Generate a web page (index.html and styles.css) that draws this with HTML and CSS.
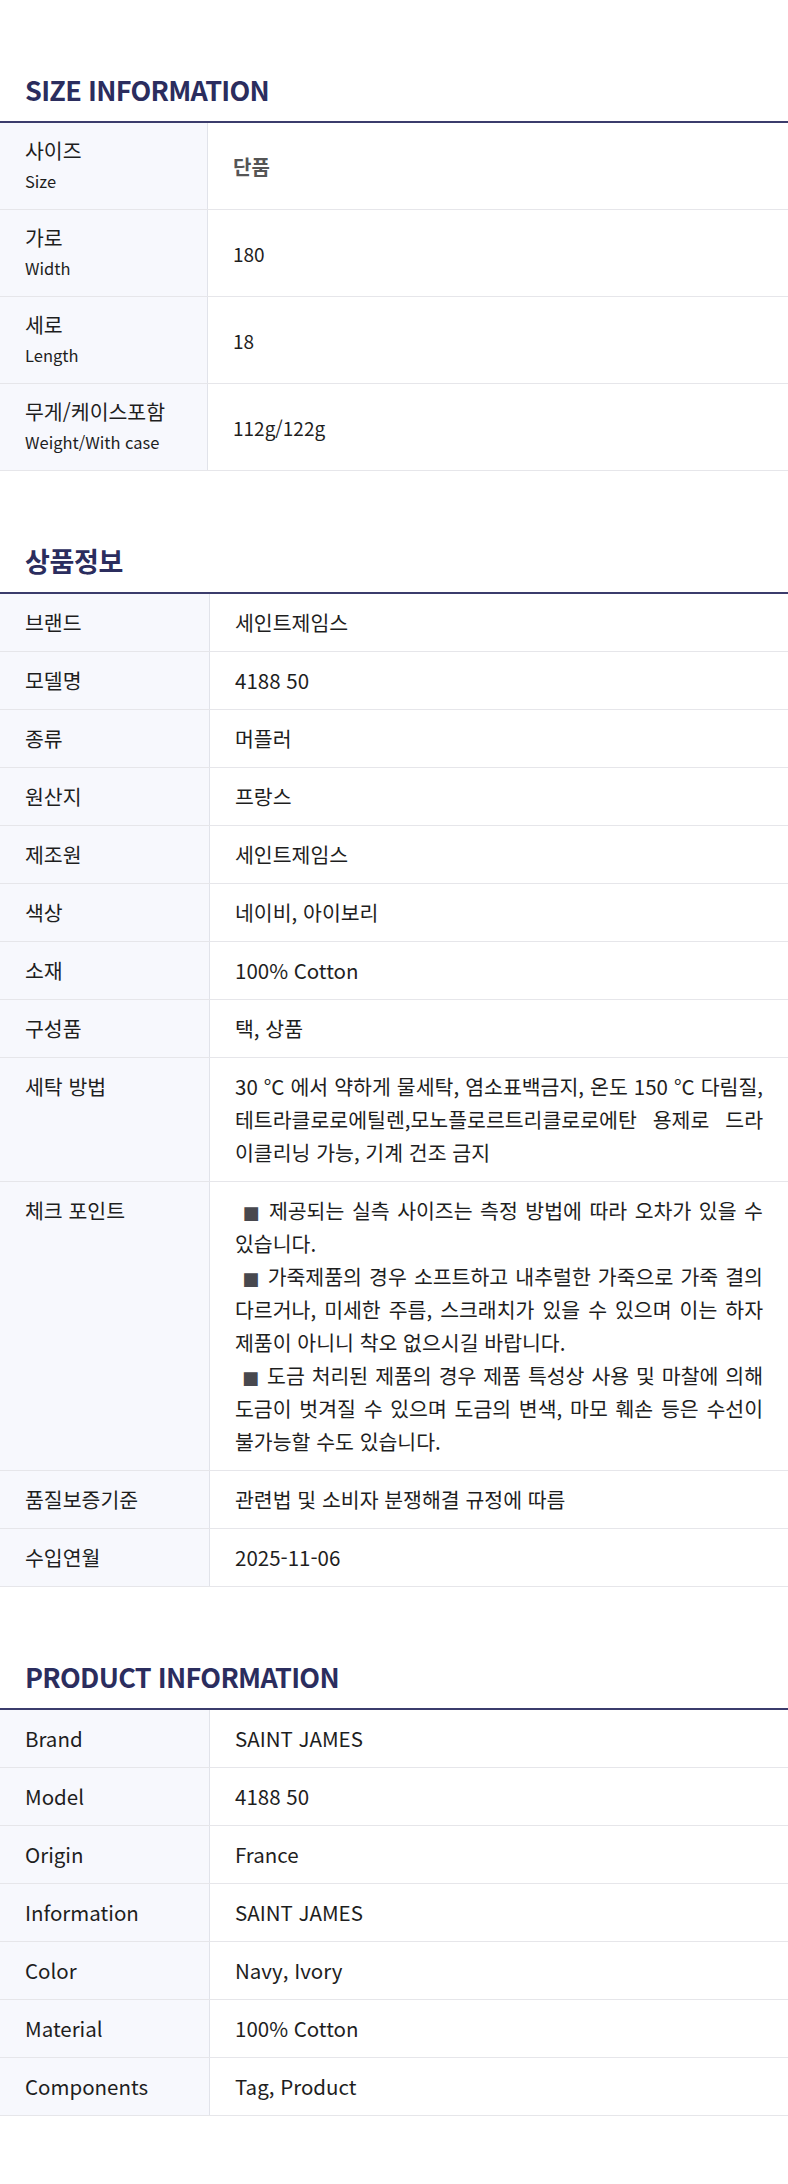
FILE: index.html
```html
<!DOCTYPE html>
<html lang="ko">
<head>
<meta charset="utf-8">
<title>상품 정보</title>
<link rel="stylesheet" href="styles.css">
</head>
<body>
<main class="page">
  <section class="block">
    <h2 class="block-title block-title-en">SIZE INFORMATION</h2>
    <div class="spec spec-size">
      <div class="row">
        <div class="label"><span class="ko">사이즈</span><span class="en">Size</span></div>
        <div class="value value-strong">단품</div>
      </div>
      <div class="row">
        <div class="label"><span class="ko">가로</span><span class="en">Width</span></div>
        <div class="value">180</div>
      </div>
      <div class="row">
        <div class="label"><span class="ko">세로</span><span class="en">Length</span></div>
        <div class="value">18</div>
      </div>
      <div class="row">
        <div class="label"><span class="ko">무게/케이스포함</span><span class="en">Weight/With case</span></div>
        <div class="value">112g/122g</div>
      </div>
    </div>
  </section>

  <section class="block">
    <h2 class="block-title">상품정보</h2>
    <div class="spec">
      <div class="row"><div class="label">브랜드</div><div class="value">세인트제임스</div></div>
      <div class="row"><div class="label">모델명</div><div class="value">4188 50</div></div>
      <div class="row"><div class="label">종류</div><div class="value">머플러</div></div>
      <div class="row"><div class="label">원산지</div><div class="value">프랑스</div></div>
      <div class="row"><div class="label">제조원</div><div class="value">세인트제임스</div></div>
      <div class="row"><div class="label">색상</div><div class="value">네이비, 아이보리</div></div>
      <div class="row"><div class="label">소재</div><div class="value">100% Cotton</div></div>
      <div class="row"><div class="label">구성품</div><div class="value">택, 상품</div></div>
      <div class="row"><div class="label">세탁 방법</div><div class="value">30 °C 에서 약하게 물세탁, 염소표백금지, 온도 150 °C 다림질, 테트라클로로에틸렌,모노플로르트리클로로에탄&nbsp; 용제로&nbsp; 드라이클리닝 가능, 기계 건조 금지</div></div>
      <div class="row"><div class="label">체크 포인트</div><div class="value">&nbsp;<span class="bullet">■</span> 제공되는 실측 사이즈는 측정 방법에 따라 오차가 있을 수 있습니다.<br>&nbsp;<span class="bullet">■</span> 가죽제품의 경우 소프트하고 내추럴한 가죽으로 가죽 결의 다르거나, 미세한 주름, 스크래치가 있을 수 있으며 이는 하자 제품이 아니니 착오 없으시길 바랍니다.<br>&nbsp;<span class="bullet">■</span> 도금 처리된 제품의 경우 제품 특성상 사용 및 마찰에 의해 도금이 벗겨질 수 있으며 도금의 변색, 마모 훼손 등은 수선이 불가능할 수도 있습니다.</div></div>
      <div class="row"><div class="label">품질보증기준</div><div class="value">관련법 및 소비자 분쟁해결 규정에 따름</div></div>
      <div class="row"><div class="label">수입연월</div><div class="value">2025-11-06</div></div>
    </div>
  </section>

  <section class="block">
    <h2 class="block-title block-title-en">PRODUCT INFORMATION</h2>
    <div class="spec">
      <div class="row"><div class="label">Brand</div><div class="value">SAINT JAMES</div></div>
      <div class="row"><div class="label">Model</div><div class="value">4188 50</div></div>
      <div class="row"><div class="label">Origin</div><div class="value">France</div></div>
      <div class="row"><div class="label">Information</div><div class="value">SAINT JAMES</div></div>
      <div class="row"><div class="label">Color</div><div class="value">Navy, Ivory</div></div>
      <div class="row"><div class="label">Material</div><div class="value">100% Cotton</div></div>
      <div class="row"><div class="label">Components</div><div class="value">Tag, Product</div></div>
    </div>
  </section>
</main>
</body>
</html>
```

FILE: styles.css
```css
html, body {
  margin: 0;
  padding: 0;
  background: #ffffff;
}

body {
  font-family: "Noto Sans CJK KR", "Noto Sans", sans-serif;
  color: #1e1e1e;
}

.page {
  width: 788px;
}

.block {
  padding-top: 70px;
}

.block-title {
  margin: 0 0 11px;
  padding-left: 25px;
  font-size: 27px;
  line-height: 40px;
  font-weight: 700;
  color: #2b2d5e;
  letter-spacing: -0.3px;
}

.block-title-en {
  letter-spacing: -0.7px;
}

.spec {
  border-top: 2px solid #3b3c6c;
}

.row {
  display: grid;
  grid-template-columns: 210px 1fr;
  border-bottom: 1px solid #e6e6ea;
}

.spec-size .row {
  grid-template-columns: 208px 1fr;
}

.label {
  background: #f7f8fd;
  border-right: 1px solid #e1e3ea;
  padding: 12px 25px;
  font-size: 20.5px;
  line-height: 33px;
  color: #1e1e1e;
}

.value {
  padding: 12px 25px;
  font-size: 20.5px;
  line-height: 33px;
  color: #1e1e1e;
  text-align: justify;
}

.spec-size .label {
  display: flex;
  flex-direction: column;
  padding: 12px 25px;
}

.spec-size .ko {
  font-size: 20.5px;
  line-height: 31px;
}

.spec-size .en {
  font-size: 16.5px;
  line-height: 31px;
}

.spec-size .value {
  display: flex;
  align-items: center;
  font-size: 19px;
}

.spec-size .value-strong {
  font-size: 20px;
  font-weight: 700;
  color: #555555;
}

.bullet {
  font-family: "DejaVu Sans", sans-serif;
  font-size: 18px;
  line-height: 1;
  color: #48484e;
}
```
